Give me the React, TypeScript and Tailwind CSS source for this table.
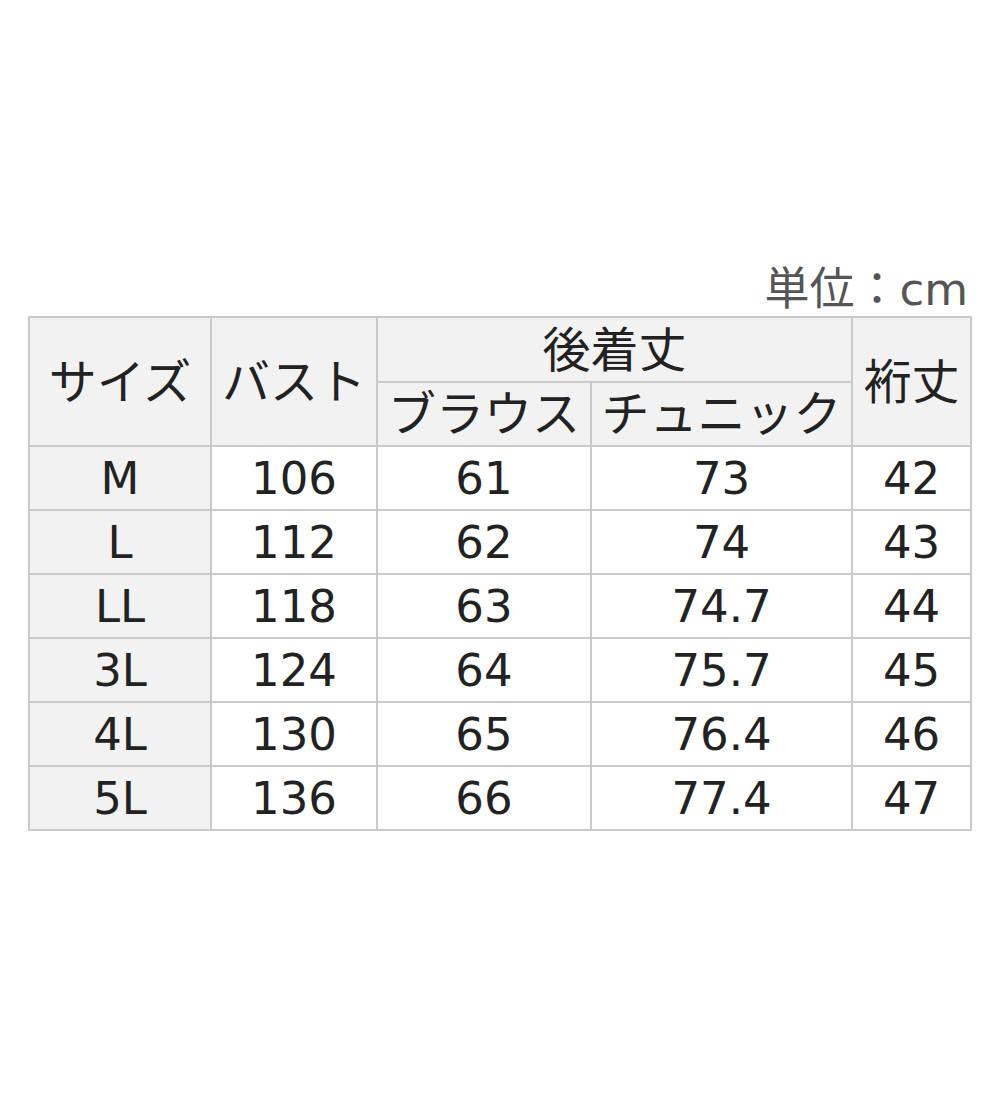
const ROWS: [string, string, string, string, string][] = [
  ["M", "106", "61", "73", "42"],
  ["L", "112", "62", "74", "43"],
  ["LL", "118", "63", "74.7", "44"],
  ["3L", "124", "64", "75.7", "45"],
  ["4L", "130", "65", "76.4", "46"],
  ["5L", "136", "66", "77.4", "47"],
];

const cell = "border-2 border-[#cacaca] text-center align-middle p-0";
const head = `${cell} font-normal text-[48px] bg-[#f2f2f2]`;

export default function App() {
  return (
    <div
      className="w-[1000px] h-[1100px] bg-white pt-[264px] pl-[28px] text-[#222]"
      style={{ fontFamily: '"DejaVu Sans", "Noto Sans CJK JP", sans-serif' }}
    >
      <div className="w-[942px]">
        <div className="text-right text-[45px] leading-[52px] text-[#555] pr-[2px]">単位：cm</div>
        <table className="w-[942px] table-fixed border-collapse border-2 border-[#cacaca] text-[45px] leading-none">
          <colgroup>
            <col className="w-[182px]" />
            <col className="w-[166px]" />
            <col className="w-[214px]" />
            <col className="w-[261px]" />
            <col className="w-[119px]" />
          </colgroup>
          <thead>
            <tr className="h-[65px]">
              <th rowSpan={2} className={head}>サイズ</th>
              <th rowSpan={2} className={head}>バスト</th>
              <th colSpan={2} className={head}>後着丈</th>
              <th rowSpan={2} className={head}>裄丈</th>
            </tr>
            <tr className="h-[64px]">
              <th className={head}>ブラウス</th>
              <th className={head}>チュニック</th>
            </tr>
          </thead>
          <tbody>
            {ROWS.map((r) => (
              <tr key={r[0]} className="h-[64px]">
                <td className={`${cell} bg-[#f2f2f2]`}>{r[0]}</td>
                <td className={cell}>{r[1]}</td>
                <td className={cell}>{r[2]}</td>
                <td className={cell}>{r[3]}</td>
                <td className={cell}>{r[4]}</td>
              </tr>
            ))}
          </tbody>
        </table>
      </div>
    </div>
  );
}
